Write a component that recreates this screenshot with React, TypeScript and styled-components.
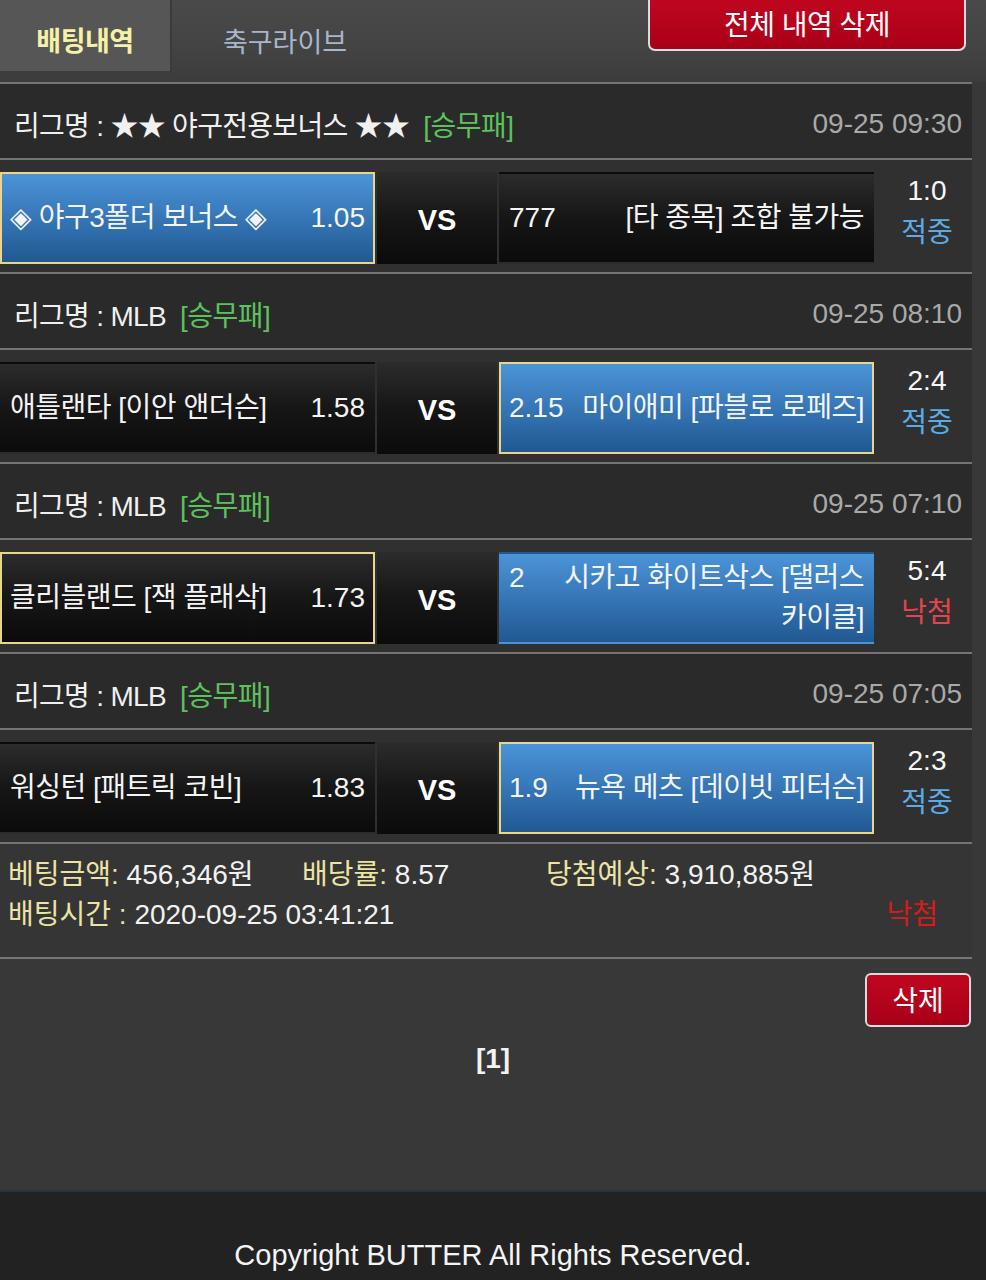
import styled, { createGlobalStyle, css } from "styled-components";

const GlobalStyle = createGlobalStyle`
  html, body {
    margin: 0;
    padding: 0;
    background: #383838;
  }
  body {
    font-family: "Liberation Sans", "Noto Sans CJK KR", sans-serif;
    color: #f2f2f2;
  }
  * {
    box-sizing: border-box;
  }
`;

const Page = styled.div`
  width: 986px;
  min-height: 1280px;
  display: flex;
  flex-direction: column;
  background: #383838;
`;

const Header = styled.div`
  height: 82px;
  display: flex;
  align-items: flex-start;
  background: linear-gradient(180deg, #4a4a4a 0%, #434343 60%, #3c3c3c 100%);
`;

const Tab = styled.div<{ $active?: boolean; $width: number }>`
  width: ${({ $width }) => $width}px;
  height: 73px;
  display: flex;
  align-items: center;
  justify-content: center;
  padding-top: 8px;
  font-size: 27px;
  ${({ $active }) =>
    $active
      ? css`
          background: #565656;
          color: #f4f2a6;
          font-weight: 700;
          letter-spacing: -0.5px;
          border-right: 2px solid #3a3a3a;
          border-bottom: 2px solid #3c3c3c;
        `
      : css`
          color: #a8b6cc;
          padding-left: 6px;
        `}
`;

const RedButton = styled.button<{ $big?: boolean }>`
  font-family: inherit;
  color: #ffffff;
  font-size: 28px;
  background: linear-gradient(180deg, #c0061f 0%, #a80018 100%);
  border: 2px solid #dcdcdc;
  border-radius: 6px;
  cursor: pointer;
  ${({ $big }) =>
    $big
      ? css`
          width: 318px;
          height: 51px;
          margin-left: auto;
          margin-right: 20px;
          border-top-width: 0;
          border-radius: 0 0 7px 7px;
          padding: 0 0 4px;
          letter-spacing: -0.5px;
        `
      : css`
          width: 106px;
          height: 54px;
          padding: 0 0 2px;
        `}
`;

const List = styled.div`
  width: 972px;
`;

const LeagueRow = styled.div`
  height: 76px;
  border-top: 2px solid #747474;
  background: #2a2a2a;
  display: flex;
  align-items: center;
  padding: 6px 10px 0 14px;
  font-size: 28px;
`;

const LeagueName = styled.span`
  color: #f0f0f0;
  letter-spacing: -0.7px;
`;

const Market = styled.span`
  color: #5cc25c;
  margin-left: 14px;
  letter-spacing: -0.5px;
`;

const LeagueTime = styled.span`
  margin-left: auto;
  color: #a9a9a9;
`;

const MatchRow = styled.div`
  border-top: 2px solid #747474;
  background: #303030;
  padding: 12px 0 8px;
  display: grid;
  grid-template-columns: 375px 120px 375px 1fr;
  column-gap: 2px;
  font-size: 28px;
`;

const TeamBox = styled.div<{ $blue?: boolean; $picked?: boolean }>`
  height: 92px;
  display: flex;
  align-items: center;
  padding: 0 8px 0 8px;
  color: #f4f4f4;
  background: ${({ $blue }) =>
    $blue
      ? "linear-gradient(180deg, #4b94d8 0%, #3676b6 50%, #215892 100%)"
      : "linear-gradient(180deg, #2c2c2c 0%, #161616 50%, #0b0b0b 100%)"};
  border: 2px solid ${({ $picked }) => ($picked ? "#e9d68c" : "transparent")};
`;

const TeamInner = styled.div`
  width: 100%;
  display: flex;
  align-items: flex-start;
  line-height: 40px;
`;

const TeamName = styled.span<{ $right?: boolean }>`
  flex: 1;
  text-align: ${({ $right }) => ($right ? "right" : "left")};
  letter-spacing: -0.5px;
  word-break: keep-all;
`;

const Odds = styled.span<{ $left?: boolean }>`
  flex: none;
  ${({ $left }) =>
    $left
      ? css`
          margin-right: 10px;
        `
      : css`
          margin-left: 12px;
        `}
`;

const VsBox = styled.div`
  height: 92px;
  display: flex;
  align-items: center;
  justify-content: center;
  background: linear-gradient(180deg, #2c2c2c 0%, #161616 50%, #0b0b0b 100%);
  font-weight: 700;
  font-size: 29px;
  color: #ffffff;
  padding-top: 4px;
`;

const ScoreCol = styled.div`
  display: flex;
  flex-direction: column;
  align-items: center;
  justify-content: flex-start;
  line-height: 42px;
  margin-top: -2px;
  padding-left: 6px;
`;

const Score = styled.span`
  color: #f6f6f6;
`;

const Result = styled.span<{ $win?: boolean }>`
  color: ${({ $win }) => ($win ? "#5aabe6" : "#e4444c")};
`;

const Summary = styled.div`
  border-top: 2px solid #747474;
  border-bottom: 2px solid #767676;
  background: #353535;
  padding: 11px 34px 22px 8px;
  font-size: 28px;
  line-height: 40px;
`;

const SummaryLine = styled.div`
  display: flex;
  align-items: center;
`;

const SummaryItem = styled.span<{ $width?: number }>`
  width: ${({ $width }) => ($width ? `${$width}px` : "auto")};
  color: #f2f2f2;
`;

const Label = styled.span`
  color: #ece4a4;
`;

const SummaryResult = styled.span`
  margin-left: auto;
  color: #d41c1c;
`;

const Actions = styled.div`
  display: flex;
  justify-content: flex-end;
  padding: 14px 15px 0 0;
`;

const Pager = styled.div`
  text-align: center;
  font-weight: 700;
  font-size: 28px;
  line-height: 36px;
  margin-top: 14px;
  color: #f2f2f2;
`;

const Spacer = styled.div`
  flex: 1;
`;

const Footer = styled.footer`
  height: 90px;
  border-top: 2px solid #2a3440;
  background: #222222;
  text-align: center;
  font-size: 29px;
  line-height: 30px;
  padding-top: 48px;
  color: #f4f4f4;
`;

type Side = {
  name: string;
  odds: string;
  blue?: boolean;
  picked?: boolean;
};

type Game = {
  league: string;
  time: string;
  home: Side;
  away: Side;
  score: string;
  win: boolean;
};

const games: Game[] = [
  {
    league: "★★ 야구전용보너스 ★★",
    time: "09-25 09:30",
    home: { name: "◈ 야구3폴더 보너스 ◈", odds: "1.05", blue: true, picked: true },
    away: { name: "[타 종목] 조합 불가능", odds: "777" },
    score: "1:0",
    win: true,
  },
  {
    league: "MLB",
    time: "09-25 08:10",
    home: { name: "애틀랜타 [이안 앤더슨]", odds: "1.58" },
    away: { name: "마이애미 [파블로 로페즈]", odds: "2.15", blue: true, picked: true },
    score: "2:4",
    win: true,
  },
  {
    league: "MLB",
    time: "09-25 07:10",
    home: { name: "클리블랜드 [잭 플래삭]", odds: "1.73", picked: true },
    away: { name: "시카고 화이트삭스 [댈러스 카이클]", odds: "2", blue: true },
    score: "5:4",
    win: false,
  },
  {
    league: "MLB",
    time: "09-25 07:05",
    home: { name: "워싱턴 [패트릭 코빈]", odds: "1.83" },
    away: { name: "뉴욕 메츠 [데이빗 피터슨]", odds: "1.9", blue: true, picked: true },
    score: "2:3",
    win: true,
  },
];

function GameBlock({ game }: { game: Game }) {
  const { league, time, home, away, score, win } = game;

  return (
    <>
      <LeagueRow>
        <LeagueName>리그명 : {league}</LeagueName>
        <Market>[승무패]</Market>
        <LeagueTime>{time}</LeagueTime>
      </LeagueRow>
      <MatchRow>
        <TeamBox $blue={home.blue} $picked={home.picked}>
          <TeamInner>
            <TeamName>{home.name}</TeamName>
            <Odds>{home.odds}</Odds>
          </TeamInner>
        </TeamBox>
        <VsBox>VS</VsBox>
        <TeamBox $blue={away.blue} $picked={away.picked}>
          <TeamInner>
            <Odds $left>{away.odds}</Odds>
            <TeamName $right>{away.name}</TeamName>
          </TeamInner>
        </TeamBox>
        <ScoreCol>
          <Score>{score}</Score>
          <Result $win={win}>{win ? "적중" : "낙첨"}</Result>
        </ScoreCol>
      </MatchRow>
    </>
  );
}

export default function App() {
  return (
    <Page>
      <GlobalStyle />
      <Header>
        <Tab $active $width={172}>배팅내역</Tab>
        <Tab $width={220}>축구라이브</Tab>
        <RedButton $big>전체 내역 삭제</RedButton>
      </Header>

      <List>
        {games.map((game) => (
          <GameBlock key={game.time} game={game} />
        ))}
        <Summary>
          <SummaryLine>
            <SummaryItem $width={294}>
              <Label>베팅금액:</Label> 456,346원
            </SummaryItem>
            <SummaryItem $width={244}>
              <Label>배당률:</Label> 8.57
            </SummaryItem>
            <SummaryItem>
              <Label>당첨예상:</Label> 3,910,885원
            </SummaryItem>
          </SummaryLine>
          <SummaryLine>
            <SummaryItem>
              <Label>배팅시간 :</Label> 2020-09-25 03:41:21
            </SummaryItem>
            <SummaryResult>낙첨</SummaryResult>
          </SummaryLine>
        </Summary>
      </List>

      <Actions>
        <RedButton>삭제</RedButton>
      </Actions>
      <Pager>[1]</Pager>
      <Spacer />
      <Footer>Copyright BUTTER All Rights Reserved.</Footer>
    </Page>
  );
}
